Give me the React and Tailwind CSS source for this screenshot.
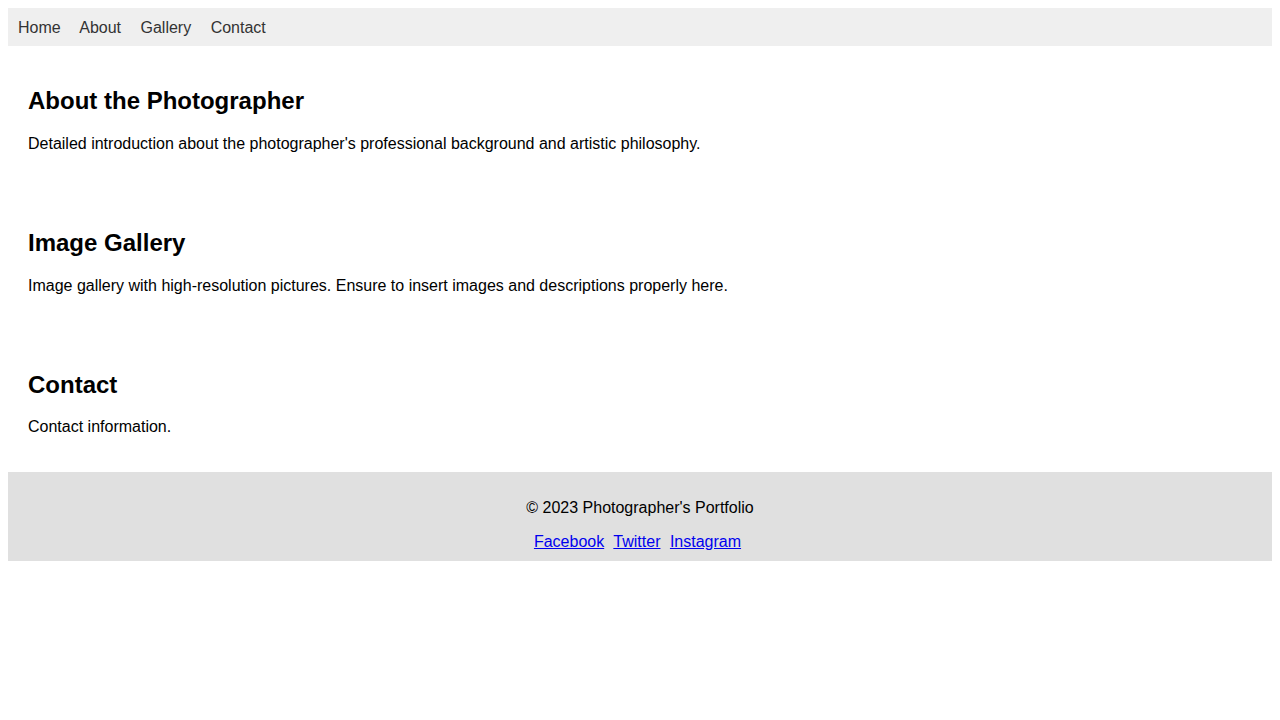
export default function App() {
  const sections = [
    { title: 'About the Photographer', text: "Detailed introduction about the photographer's professional background and artistic philosophy." },
    { title: 'Image Gallery', text: 'Image gallery with high-resolution pictures. Ensure to insert images and descriptions properly here.' },
    { title: 'Contact', text: 'Contact information.' },
  ];

  return (
    <div className="p-2 bg-white text-black text-base leading-[18.4px] font-['Liberation_Sans',Arial,sans-serif]">
      {/* Nav */}
      <nav className="bg-[#efefef] px-[10px] pt-[11px] pb-[9px]">
        {['Home', 'About', 'Gallery', 'Contact'].map((l) => (
          <span key={l}>
            <a href="#" className="text-[#333] mr-[15px]">{l}</a>{' '}
          </span>
        ))}
      </nav>

      {sections.map((s) => (
        <section key={s.title} className="px-5 pt-[21px] pb-[19px]">
          <h2 className="text-2xl font-bold leading-[27.6px] my-[19.92px]">{s.title}</h2>
          <p className="my-4">{s.text}</p>
        </section>
      ))}

      {/* Footer */}
      <footer className="bg-[#e0e0e0] pt-[11px] pb-[9px] text-center">
        <p className="my-4">© 2023 Photographer's Portfolio</p>
        <div>
          {['Facebook', 'Twitter', 'Instagram'].map((l) => (
            <span key={l}>
              <a href="#" className="mr-[5px] text-[#0000ee] underline">{l}</a>{' '}
            </span>
          ))}
        </div>
      </footer>
    </div>
  );
}
